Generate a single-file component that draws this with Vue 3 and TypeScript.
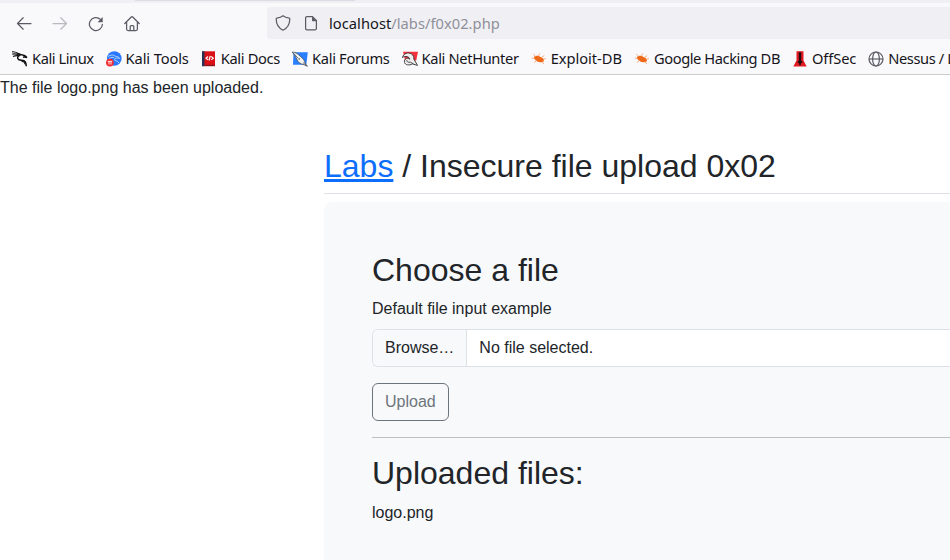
<script setup lang="ts">
type IconName = 'dragon' | 'tools' | 'docs' | 'forums' | 'hunter' | 'bug' | 'offsec' | 'globe'

interface Bookmark {
  icon: IconName
  label: string
  tracking: number
}

const bookmarks: Bookmark[] = [
  { icon: 'dragon', label: 'Kali Linux', tracking: -0.44 },
  { icon: 'tools', label: 'Kali Tools', tracking: -0.12 },
  { icon: 'docs', label: 'Kali Docs', tracking: -0.34 },
  { icon: 'forums', label: 'Kali Forums', tracking: -0.31 },
  { icon: 'hunter', label: 'Kali NetHunter', tracking: -0.35 },
  { icon: 'bug', label: 'Exploit-DB', tracking: -0.02 },
  { icon: 'bug', label: 'Google Hacking DB', tracking: -0.42 },
  { icon: 'offsec', label: 'OffSec', tracking: -0.1 },
  { icon: 'globe', label: 'Nessus / Login', tracking: -0.4 },
]

const uploadedFiles: string[] = ['logo.png']
</script>

<template>
  <div class="window">
    <header class="chrome">
      <div class="tab-strip"><div class="tab-edge"></div></div>
      <div class="nav-bar">
        <div class="nav-buttons">
          <svg class="nav-icon" viewBox="0 0 16 16"><path d="M15 7.500H1.500M7.200 1.800 1.500 7.500l5.700 5.700" /></svg>
          <svg class="nav-icon disabled" viewBox="0 0 16 16"><path d="M1 7.500h13.500M8.800 1.800 14.500 7.500l-5.700 5.700" /></svg>
          <svg class="nav-icon" viewBox="0 0 16 16">
            <path d="M14.400 8.300A6.500 6.500 0 1 1 12.300 3.300" />
            <path class="solid" d="M14.700 1v4.700a.5.5 0 0 1-.5.5H9.500z" />
          </svg>
          <svg class="nav-icon" viewBox="0 0 16 16">
            <path d="M.8 7.500 7.300 1a1 1 0 0 1 1.400 0L15.200 7.500M2.600 6v7a1.500 1.500 0 0 0 1.500 1.500h7.800a1.500 1.500 0 0 0 1.500-1.500V6M6.200 14.500v-4a1 1 0 0 1 1-1h1.600a1 1 0 0 1 1 1v4" />
          </svg>
        </div>
        <div class="url-bar">
          <svg class="nav-icon" viewBox="0 0 16 16">
            <path d="M8 .8C6.400 2.200 4 2.900 1.800 3.200c-.4.100-.6.400-.6.800.1 5 1.900 8.900 6.800 11.200 4.900-2.300 6.700-6.200 6.800-11.200 0-.4-.2-.7-.6-.8C12 2.900 9.600 2.200 8 .8z" />
          </svg>
          <svg class="nav-icon" viewBox="0 0 16 16">
            <path d="M9.500 1.600H4A1.400 1.400 0 0 0 2.600 3v10.400A1.400 1.400 0 0 0 4 14.800h8a1.400 1.400 0 0 0 1.400-1.400V5.500z" />
            <path class="solid" d="M9 1.500v4a.7.7 0 0 0 .7.7h4z" />
          </svg>
          <span class="url"><b>localhost</b>/labs/f0x02.php</span>
        </div>
      </div>
      <nav class="bookmarks">
        <a v-for="mark in bookmarks" :key="mark.label" class="bookmark">
          <svg v-if="mark.icon === 'dragon'" viewBox="0 0 16 16">
            <g fill="none" stroke="#111">
              <path stroke-width="1.200" d="M0 .8c3-.3 5 .3 7.200 2.300M.3 3.200c2.500-.6 4.500-.2 6.500.4M1 5.500c2-1 3.500-1 5-.9" />
              <path stroke-width="1.500" d="M5.500 2.500c2 .3 3.500 1.100 5 1.600 1.700.2 3 .8 4.500 2.400-1.700-.7-3-.6-4-.3M8.500 3.700C5.500 5 4.800 7.200 6.500 8.500c2.500 1.300 5 .2 6.700 2.200.9 1.200 1 2.800 1.100 4.500" />
              <path stroke-width="1.100" d="M9.500 10.300c2.200.1 3.400 1.200 3.800 3.200" />
            </g>
          </svg>
          <svg v-else-if="mark.icon === 'tools'" viewBox="0 0 16 16">
            <circle cx="8.300" cy="7.500" r="7.300" fill="#2777ff" />
            <path d="M2 5.500c3-2 6-1.800 7.800.1 2-.1 3.300.6 4 2-1.500-.8-3-.7-4-.1-1.500.4-1.800 1.500-.7 2.100 1.700.4 3 .5 3.800 2.500M3 7.500c2-1.300 4-1.400 5.500-.8" fill="none" stroke="#c3dcfa" stroke-width=".9" />
            <circle cx="3.900" cy="11.600" r="3.900" fill="#f02b32" />
            <path d="M1.700 10.400h4.500M3 10.500v3M5 10.500v3" stroke="#ffe5e5" fill="none" />
          </svg>
          <svg v-else-if="mark.icon === 'docs'" viewBox="0 0 16 16">
            <path fill="#d91016" d="M1.500.3H14v14.400H1.500z" />
            <path fill="#263354" d="M1 .3h2.500v15H1z" />
            <path fill="#8a1720" d="M3.500 13.800H14v1.400H3.500z" />
            <path d="M7 5.500 5 7.300l2 1.600M10.300 5.500l2 1.800-2 1.600M9.300 4.900 8 9.500" stroke="#fff" stroke-width="1.200" fill="none" />
          </svg>
          <svg v-else-if="mark.icon === 'forums'" viewBox="0 0 16 16">
            <path fill="#2a7fff" d="M1.500 1.200h14.300l-1.500 12.500H1z" />
            <path d="M.2 1C3 1 6.200 3 8.200 5.200c3.200 2.500 4.300 4 5 7.200l2.200 2.900-3.500-1.600C8.200 12.800 5.800 11.300 4.800 8.200 3.900 6.200 2 3.200.2 1z" fill="#f3f2ef" stroke="#343a42" stroke-width=".7" />
            <path d="m1.500 2.200 4.800 5.200M11 11.600l3.700 3.100" fill="none" stroke="#343a42" stroke-width=".7" />
            <circle cx="7.200" cy="8" r=".7" fill="#343a42" />
          </svg>
          <svg v-else-if="mark.icon === 'hunter'" viewBox="0 0 16 16">
            <path fill="#f7323c" d="M1 .8h15l-1.700 8.400L4 13.500z" />
            <path d="M.4 6.500C1.500 2.500 6 .7 9.500 3c2 1.400 2.600 3 2.300 5l3.700 6.400-5-1.500C7 14.700 3.400 14 2.500 11.500 2 9.500 3 8 4.500 7.500c1-.5 2.200-.2 3.200.7C7.500 5.700 3.500 4.500.4 6.500z" fill="#efeeee" stroke="#303030" stroke-width=".9" />
            <path d="M4.800 9c-.4 1.800 1.500 2.600 3.600 2.200l3 1.600" fill="none" stroke="#303030" stroke-width=".8" />
          </svg>
          <svg v-else-if="mark.icon === 'bug'" viewBox="0 0 16 16">
            <path fill="#ef6817" d="M3 5.700C4.500 4.200 7.500 4.200 10 6.200c1.700.5 3 1.700 3 2.900l-.8 2c-2.100.6-4.600.2-6.400-1.200C4 9 2.500 7.300 3 5.700z" />
            <path d="M4.500 5.500 2.300 2.900M7.500 5 8.800 2.300M3.500 7.500 .7 7.200M5.300 10 3 11.400M10.500 6.300l2.700-1.600M12.500 8.200l2.500-.7M11 10.500l1.800 2.500" fill="none" stroke="#f4ad83" stroke-width=".9" />
          </svg>
          <svg v-else-if="mark.icon === 'offsec'" viewBox="0 0 16 16">
            <path fill="#e21a22" d="M4.500.2h7v9.300l3.200 5.900H1.300l3.200-5.900z" />
            <path fill="#250b0e" d="M6.800 1.200h2.400v8l1.500 2.300-1.900 1v1.700H7.200v-1.700l-1.900-1 1.500-2.300z" />
          </svg>
          <svg v-else viewBox="0 0 16 16">
            <g fill="none" stroke="#5b5b66" stroke-width="1.200">
              <circle cx="8" cy="8" r="7" />
              <ellipse cx="8" cy="8" rx="3.400" ry="7" />
              <path d="M1 8h14" />
            </g>
          </svg>
          <span :style="{ letterSpacing: mark.tracking + 'px' }">{{ mark.label }}</span>
        </a>
      </nav>
    </header>

    <main class="page">
      <p class="notice">The file logo.png has been uploaded.</p>
      <div class="container">
        <h2 class="title"><a class="labs-link">Labs</a> / Insecure file upload 0x02</h2>
        <section class="panel">
          <h2>Choose a file</h2>
          <div class="label">Default file input example</div>
          <div class="file-input">
            <span class="browse">Browse…</span>
            <span class="selection">No file selected.</span>
          </div>
          <button class="upload" type="button">Upload</button>
          <hr />
          <h2>Uploaded files:</h2>
          <div v-for="file in uploadedFiles" :key="file">{{ file }}</div>
        </section>
      </div>
    </main>
  </div>
</template>

<style>
body {
  margin: 0;
  overflow: hidden;
}
</style>

<style scoped>
* {
  box-sizing: border-box;
}
.window {
  display: flex;
  flex-direction: column;
  width: 100%;
  height: 560px;
  overflow: hidden;
  background: #fff;
}
.chrome {
  flex: none;
  height: 75px;
  background: #f9f9fb;
  border-bottom: 1px solid #ccc;
  font-family: 'Noto Sans', sans-serif;
  color: #15141a;
}
.tab-strip {
  height: 3px;
  background: #f0f0f4;
}
.tab-edge {
  width: 220px;
  height: 1px;
  margin-left: 135px;
  background: #dcdce4;
}
.nav-bar {
  display: flex;
  height: 40px;
  padding-top: 4px;
}
.nav-buttons {
  display: flex;
  align-items: center;
  gap: 20px;
  width: 267px;
  height: 32px;
  padding: 1px 0 0 16px;
}
.nav-icon {
  flex: none;
  width: 16px;
  height: 16px;
  fill: none;
  stroke: #5b5b66;
  stroke-width: 1.25;
  stroke-linecap: round;
  stroke-linejoin: round;
}
.nav-icon .solid {
  fill: #5b5b66;
  stroke: none;
}
.nav-icon.disabled {
  opacity: 0.4;
}
.url-bar {
  display: flex;
  flex: 1;
  align-items: center;
  gap: 12px;
  height: 32px;
  padding-left: 8px;
  border-radius: 4px 0 0 4px;
  background: #f0f0f4;
}
.url {
  margin-left: -2px;
  font-size: 14.667px;
  line-height: 20px;
  letter-spacing: 0.04px;
  color: #8f8f98;
  white-space: nowrap;
}
.url b {
  font-weight: 400;
  color: #15141a;
}
.bookmarks {
  display: flex;
  align-items: center;
  gap: 12px;
  height: 31px;
  padding-left: 12px;
  overflow: hidden;
}
.bookmark {
  display: flex;
  flex: none;
  align-items: center;
  gap: 4px;
  font-size: 14.667px;
  line-height: 20px;
  white-space: nowrap;
}
.bookmark svg {
  width: 16px;
  height: 16px;
}
.bookmark span {
  padding-bottom: 2px;
}
.page {
  flex: 1;
  font-family: 'Liberation Sans', Arial, sans-serif;
  font-size: 16px;
  line-height: 24px;
  color: #212529;
}
.notice {
  margin: 0;
  padding-top: 1px;
}
.container {
  padding: 47px 0 0 324px;
}
h2 {
  margin: 0 0 8px;
  font-size: 32px;
  font-weight: 500;
  line-height: 38.4px;
}
.title {
  padding-bottom: 8px;
  border-bottom: 1px solid #dee2e6;
}
.labs-link {
  color: #0d6efd;
  text-decoration: underline;
}
.panel {
  height: 420px;
  padding: 48.3px 0 48px 48px;
  border-radius: 8px 0 0 0;
  background: #f8f9fa;
}
.label {
  margin-bottom: 8px;
}
.file-input {
  display: flex;
  height: 38px;
  margin-bottom: 16px;
  overflow: hidden;
  border: 1px solid #dee2e6;
  border-right: 0;
  border-radius: 6px 0 0 6px;
  background: #fff;
}
.browse {
  padding: 6px 12px;
  border-right: 1px solid #dee2e6;
  background: #f8f9fa;
}
.selection {
  padding: 6px 12px;
}
.upload {
  display: block;
  height: 38px;
  padding: 6px 12px;
  border: 1px solid #6c757d;
  border-radius: 6px;
  background: transparent;
  font: inherit;
  color: #6c757d;
}
hr {
  height: 1px;
  margin: 16px 0;
  border: 0;
  background: #bdbfc1;
}
</style>
